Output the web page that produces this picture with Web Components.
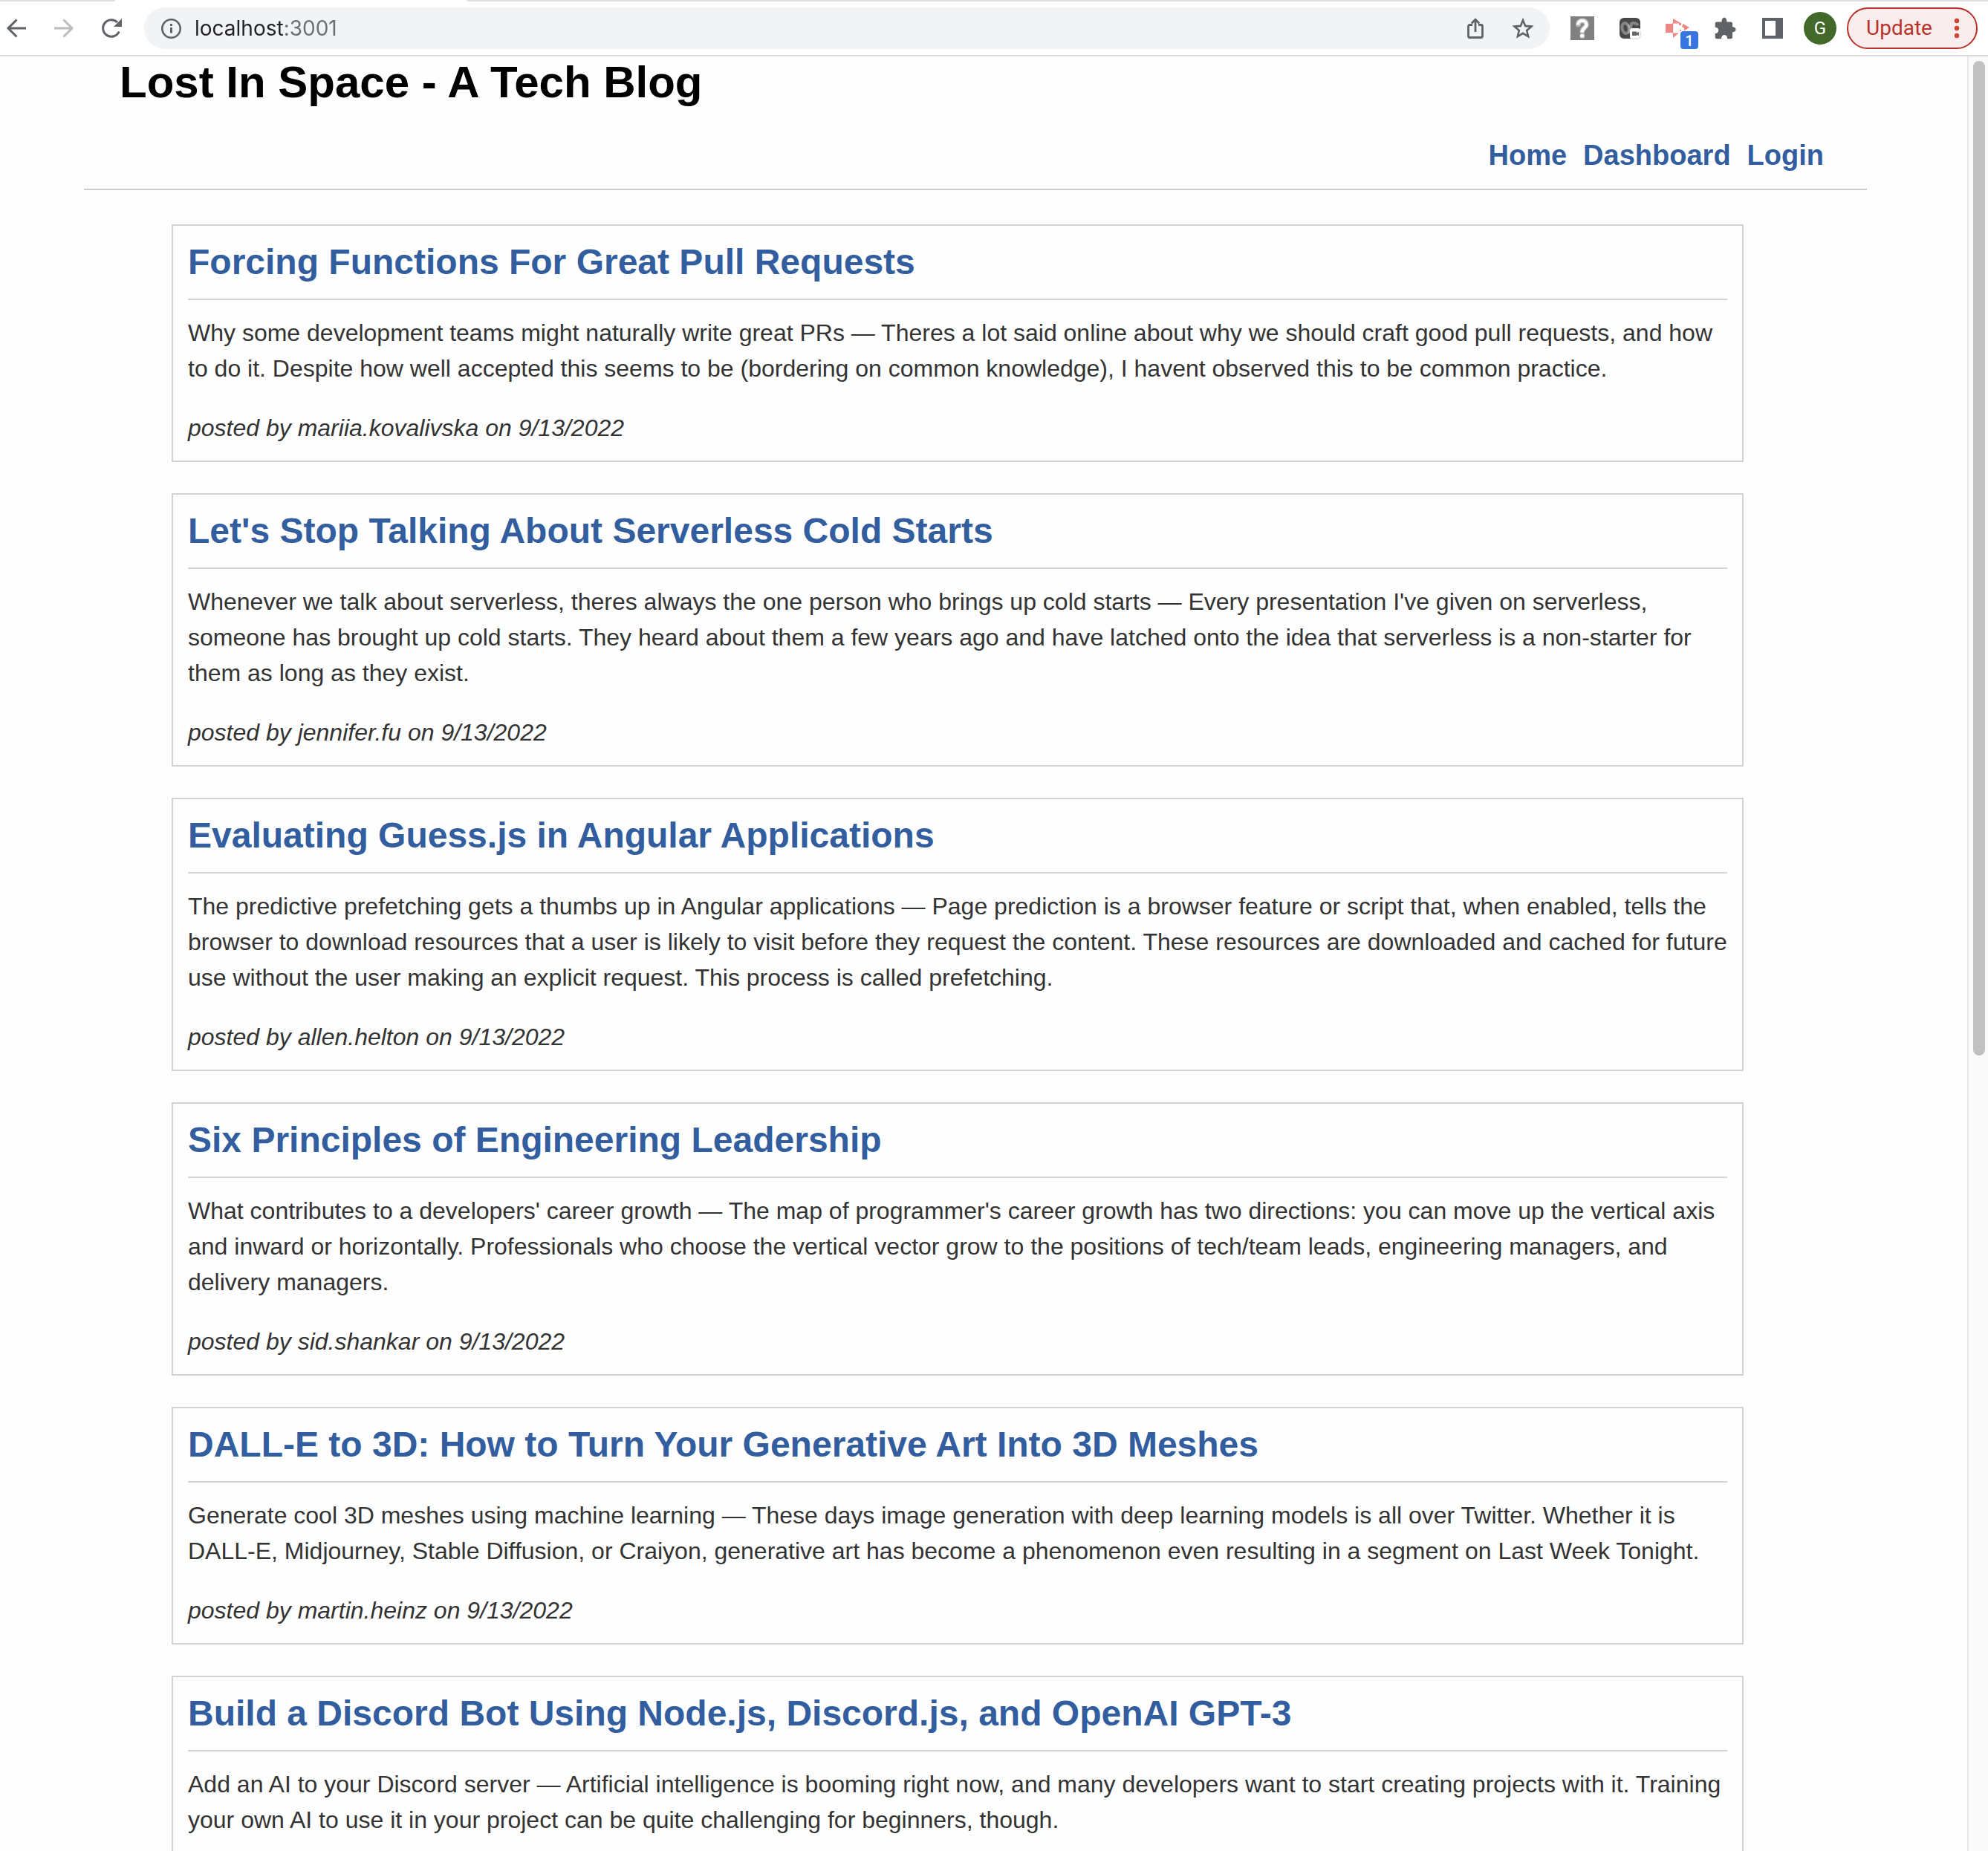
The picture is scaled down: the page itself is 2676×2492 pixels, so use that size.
<!DOCTYPE html>
<html lang="en">
<head>
<meta charset="utf-8">
<title>Lost In Space - A Tech Blog</title>
<style>
  html, body { margin: 0; height: 100%; overflow: hidden; }
  body { font-family: "Liberation Sans", Arial, Helvetica, sans-serif; font-size: 32px; line-height: 48px; color: #333; background: #fefefe; }
</style>
</head>
<body>
<browser-window>
  <browser-toolbar slot="toolbar"></browser-toolbar>
  <blog-page>
    <blog-header slot="header" heading="Lost In Space - A Tech Blog">
      <nav-link href="#home">Home</nav-link>
      <nav-link href="#dashboard">Dashboard</nav-link>
      <nav-link href="#login">Login</nav-link>
    </blog-header>
    <blog-post heading="Forcing Functions For Great Pull Requests" author="mariia.kovalivska" date="9/13/2022">Why some development teams might naturally write great PRs — Theres a lot said online about why we should craft good pull requests, and how to do it. Despite how well accepted this seems to be (bordering on common knowledge), I havent observed this to be common practice.</blog-post>
    <blog-post heading="Let's Stop Talking About Serverless Cold Starts" author="jennifer.fu" date="9/13/2022">Whenever we talk about serverless, theres always the one person who brings up cold starts — Every presentation I've given on serverless, someone has brought up cold starts. They heard about them a few years ago and have latched onto the idea that serverless is a non-starter for them as long as they exist.</blog-post>
    <blog-post heading="Evaluating Guess.js in Angular Applications" author="allen.helton" date="9/13/2022">The predictive prefetching gets a thumbs up in Angular applications — Page prediction is a browser feature or script that, when enabled, tells the browser to download resources that a user is likely to visit before they request the content. These resources are downloaded and cached for future use without the user making an explicit request. This process is called prefetching.</blog-post>
    <blog-post heading="Six Principles of Engineering Leadership" author="sid.shankar" date="9/13/2022">What contributes to a developers' career growth — The map of programmer's career growth has two directions: you can move up the vertical axis and inward or horizontally. Professionals who choose the vertical vector grow to the positions of tech/team leads, engineering managers, and delivery managers.</blog-post>
    <blog-post heading="DALL-E to 3D: How to Turn Your Generative Art Into 3D Meshes" author="martin.heinz" date="9/13/2022">Generate cool 3D meshes using machine learning — These days image generation with deep learning models is all over Twitter. Whether it is DALL-E, Midjourney, Stable Diffusion, or Craiyon, generative art has become a phenomenon even resulting in a segment on Last Week Tonight.</blog-post>
    <blog-post heading="Build a Discord Bot Using Node.js, Discord.js, and OpenAI GPT-3">Add an AI to your Discord server — Artificial intelligence is booming right now, and many developers want to start creating projects with it. Training your own AI to use it in your project can be quite challenging for beginners, though.</blog-post>
  </blog-page>
  <scroll-track slot="scrollbar"></scroll-track>
</browser-window>

<template id="browser-window">
  <style>
    :host { display: flex; flex-direction: column; height: 100vh; overflow: hidden; }
    .view { display: flex; flex: 1; min-height: 0; }
    .content { flex: 1; min-width: 0; overflow: hidden; }
  </style>
  <slot name="toolbar"></slot>
  <div class="view">
    <div class="content"><slot></slot></div>
    <slot name="scrollbar"></slot>
  </div>
</template>

<template id="browser-toolbar">
  <style>
    :host { display: block; background: #fff; border-bottom: 2px solid #dadadc; font-family: Roboto, sans-serif; }
    .tabs { display: flex; justify-content: space-between; height: 2px; }
    .tabs span { background: #dfdee4; }
    .tabs .before { width: 155px; border-bottom-right-radius: 2px; }
    .tabs .after { flex: 1; margin-left: 473px; border-bottom-left-radius: 2px; }
    .bar { display: flex; align-items: center; height: 56px; padding: 8px 14px 8px 6px; }
    button { display: flex; align-items: center; justify-content: center; margin: 0; padding: 0; border: 0; background: none; font: inherit; color: #5f6368; }
    svg { display: block; width: 32px; height: 32px; }
    .history { display: flex; gap: 32px; }
    .history button { width: 32px; height: 56px; }
    .history button:disabled { color: #bbbcbe; }
    .omnibox { display: flex; align-items: center; flex: 1; height: 56px; margin: 0 12px 0 28px; padding: 0 4px 0 20px; box-sizing: border-box; border-radius: 28px; background: #f1f3f4; color: #5f6368; }
    input { flex: 1; min-width: 0; height: 40px; margin: 0 0 0 16px; padding: 0; border: 0; outline: 0; font: 28px/40px Inter, sans-serif; color: #202124;
      background: linear-gradient(to right, #202124 122px, #6b6e72 122px); -webkit-background-clip: text; background-clip: text; -webkit-text-fill-color: transparent; }
    .slot { width: 64px; height: 56px; }
    .extensions { display: flex; }
    .badged { display: grid; grid-template: 100% / 100%; justify-items: center; align-items: center; }
    .badged svg, .badged b { grid-area: 1 / 1; }
    .badged b { place-self: end; width: 24px; height: 24px; margin-right: 4px; border-radius: 4px; background: #3775e0; color: #fff; font-size: 20px; font-weight: 500; line-height: 26px; text-align: center; }
    .avatar span { width: 44px; height: 44px; border-radius: 50%; background: #42692a; color: #fff; font-size: 24px; line-height: 44px; text-align: center; }
    .update { box-sizing: border-box; width: 176px; height: 56px; margin-left: 4px; padding: 0 12px 0 24px; justify-content: space-between; border: 2px solid #b8322a; border-radius: 28px; background: #f8ecec; color: #b8322a; font-size: 28px; }
    .update svg { width: 28px; height: 32px; }
  </style>
  <div class="tabs"><span class="before"></span><span class="after"></span></div>
  <div class="bar">
    <div class="history">
      <button aria-label="Back"><svg viewBox="0 0 32 32" fill="none" stroke="currentColor" stroke-width="3"><path d="M29 16H5M16.500 4.500 5 16l11.500 11.500"/></svg></button>
      <button aria-label="Forward" disabled><svg viewBox="0 0 32 32" fill="none" stroke="currentColor" stroke-width="3"><path d="M3 16h24M15.500 4.500 27 16 15.500 27.500"/></svg></button>
      <button aria-label="Reload"><svg viewBox="0 0 32 32"><path d="M26.300 20.500A11.300 11.300 0 1 1 24 8" fill="none" stroke="currentColor" stroke-width="3"/><path d="M30 3v11H19z" fill="currentColor"/></svg></button>
    </div>
    <div class="omnibox">
      <svg viewBox="0 0 32 32"><circle cx="16.500" cy="16.500" r="12.200" fill="none" stroke="currentColor" stroke-width="2.600"/><path d="M15 15h3v7.500h-3zM15 10h3v3h-3z" fill="currentColor"/></svg>
      <input type="text" value="localhost:3001" aria-label="Address">
      <button class="slot" aria-label="Share"><svg viewBox="0 0 32 32" fill="none" stroke="currentColor" stroke-width="2.800"><path d="M12 11.500H8.500a2 2 0 0 0-2 2v13a2 2 0 0 0 2 2h15a2 2 0 0 0 2-2v-13a2 2 0 0 0-2-2H20M16 21V4.500M10.800 9.500 16 4.300l5.200 5.200"/></svg></button>
      <button class="slot" aria-label="Bookmark"><svg viewBox="0 0 32 32" fill="none" stroke="currentColor" stroke-width="2.600"><path d="M16 5.200l3.200 7.700 8.300.7-6.300 5.400 1.900 8.100L16 22.800l-7.100 4.300 1.900-8.100-6.300-5.400 8.300-.7z"/></svg></button>
    </div>
    <div class="extensions">
      <button class="slot" aria-label="Help extension"><svg viewBox="0 0 32 32"><path fill="#808080" d="M0 0h32v32H0z"/><g fill="none" stroke="#b5b5b5" stroke-width="7" stroke-linecap="round"><path d="M10.500 11c0-7 11-7 11 0 0 4-5.500 4.500-5.500 9M16 26.200v.2"/></g><g fill="none" stroke="#fff" stroke-width="4.200"><path d="M10 11.500c0-7.500 11.500-7.500 11.500 0 0 4-6 4.500-6 10"/><path d="M13.200 26.200h4.800"/></g></svg></button>
      <button class="slot" aria-label="Recorder extension"><svg viewBox="0 0 32 32"><rect x="2" y="2" width="28" height="28" rx="6" fill="#484848"/><g fill="none" stroke="#858585" stroke-width="4"><ellipse cx="10" cy="16" rx="4.500" ry="7" transform="rotate(-12 10 16)"/><path d="M17 10.500c3-2.500 8-1.500 10 1.500M18 10c-1.500 5-.5 10 1 12"/></g><path d="M14 11c2 4 2 8 0 12" fill="none" stroke="#b0b0b0" stroke-width="2"/><rect x="16" y="16" width="14.500" height="14.500" rx="3.500" fill="#fff"/><path d="M30 20v7a3 3 0 0 1-3 3h-8" fill="none" stroke="#ccc"/><path d="M19 20.500h6v1.700l3-1.500v5.600l-3-1.500V26h-6z" fill="#666"/></svg></button>
      <button class="slot badged" aria-label="Capture extension, 1 notification"><svg viewBox="0 0 32 32"><g fill="#f08784"><path d="M0 10h9v12H0zM10 3l11 6.500H10zM10 22.500h8L10 29zM23.500 10l8.500 5-7 4.500V16l-3-2z"/><path d="M9 9h1.200v14H9zM18 9h3v3h-3zM19 18h2v2h-2z"/></g></svg><b>1</b></button>
      <button class="slot" aria-label="Extensions"><svg viewBox="0 0 32 32"><path fill="currentColor" d="M11.500 7.500C11.500 -.5 18.500 -.5 18.500 7.500h5A2.500 2.500 0 0 1 26 10v4.200c6 0 6 7 0 7v6.500a2.500 2.500 0 0 1-2.500 2.500h-4.300c0-7-8.200-7-8.200 0H5.200A2.500 2.500 0 0 1 2.700 27.700V23c6 0 6-8.200 0-8.200V10a2.500 2.500 0 0 1 2.500-2.500z"/></svg></button>
      <button class="slot" aria-label="Side panel"><svg viewBox="0 0 32 32"><path fill="currentColor" fill-rule="evenodd" d="M2 2h28v28H2zM6 6v20h14V6z"/></svg></button>
      <button class="slot avatar" aria-label="Profile"><span>G</span></button>
    </div>
    <button class="update">Update<svg viewBox="0 0 28 32" fill="#cc4433"><circle cx="14" cy="6" r="3.200"/><circle cx="14" cy="16" r="3.200"/><circle cx="14" cy="26" r="3.200"/></svg></button>
  </div>
</template>

<template id="scroll-track">
  <style>
    :host { display: block; box-sizing: border-box; width: 28px; padding: 6px 4px 6px 6px; border-left: 2px solid #e8e8e8; background: #fafafa; }
    div { width: 16px; height: 55.7%; border-radius: 8px; background: #c1c1c1; }
  </style>
  <div></div>
</template>

<template id="blog-page">
  <style>
    :host { display: block; padding: 0 135px 0 113px; }
    main { display: flex; flex-direction: column; gap: 42px; margin-top: 46px; padding: 0 166px 0 118px; }
  </style>
  <slot name="header"></slot>
  <main><slot></slot></main>
</template>

<template id="blog-header">
  <style>
    :host { display: block; border-bottom: 2px solid #ccc; }
    header { padding: 0 48px 22px; }
    h1 { margin: 0 0 40px; font-size: 60px; line-height: 70px; color: #000; }
    nav { display: flex; justify-content: flex-end; gap: 22px; padding-right: 10px; }
  </style>
  <header>
    <h1></h1>
    <nav><slot></slot></nav>
  </header>
</template>

<template id="nav-link">
  <style>
    :host { display: block; font-size: 38px; line-height: 46px; font-weight: bold; }
    a { color: #325d9f; text-decoration: none; }
  </style>
  <a><slot></slot></a>
</template>

<template id="blog-post">
  <style>
    :host { display: block; }
    article { padding: 20px; border: 2px solid #d3d3d3; }
    h2 { margin: 0; padding-bottom: 21px; border-bottom: 2px solid #d3d3d3; font-size: 48px; line-height: 57px; }
    a { color: #325d9f; text-decoration: none; }
    p { margin: 20px 0 32px; }
    footer { font-style: italic; min-height: 48px; }
  </style>
  <article>
    <h2><a href="#post"></a></h2>
    <p><slot></slot></p>
    <footer></footer>
  </article>
</template>

<script>
  class TemplateElement extends HTMLElement {
    connectedCallback() {
      if (this.shadowRoot) return;
      const root = this.attachShadow({ mode: "open" });
      root.append(document.getElementById(this.localName).content.cloneNode(true));
      this.fill(root);
    }
    fill() {}
  }
  class BrowserWindow extends TemplateElement {}
  class BrowserToolbar extends TemplateElement {}
  class ScrollTrack extends TemplateElement {}
  class BlogPage extends TemplateElement {}
  class BlogHeader extends TemplateElement {
    fill(root) { root.querySelector("h1").textContent = this.getAttribute("heading"); }
  }
  class NavLink extends TemplateElement {
    fill(root) { root.querySelector("a").href = this.getAttribute("href"); }
  }
  class BlogPost extends TemplateElement {
    fill(root) {
      root.querySelector("a").textContent = this.getAttribute("heading");
      if (this.hasAttribute("author")) {
        root.querySelector("footer").textContent = `posted by ${this.getAttribute("author")} on ${this.getAttribute("date")}`;
      }
    }
  }
  customElements.define("browser-window", BrowserWindow);
  customElements.define("browser-toolbar", BrowserToolbar);
  customElements.define("scroll-track", ScrollTrack);
  customElements.define("blog-page", BlogPage);
  customElements.define("blog-header", BlogHeader);
  customElements.define("nav-link", NavLink);
  customElements.define("blog-post", BlogPost);
</script>
</body>
</html>
